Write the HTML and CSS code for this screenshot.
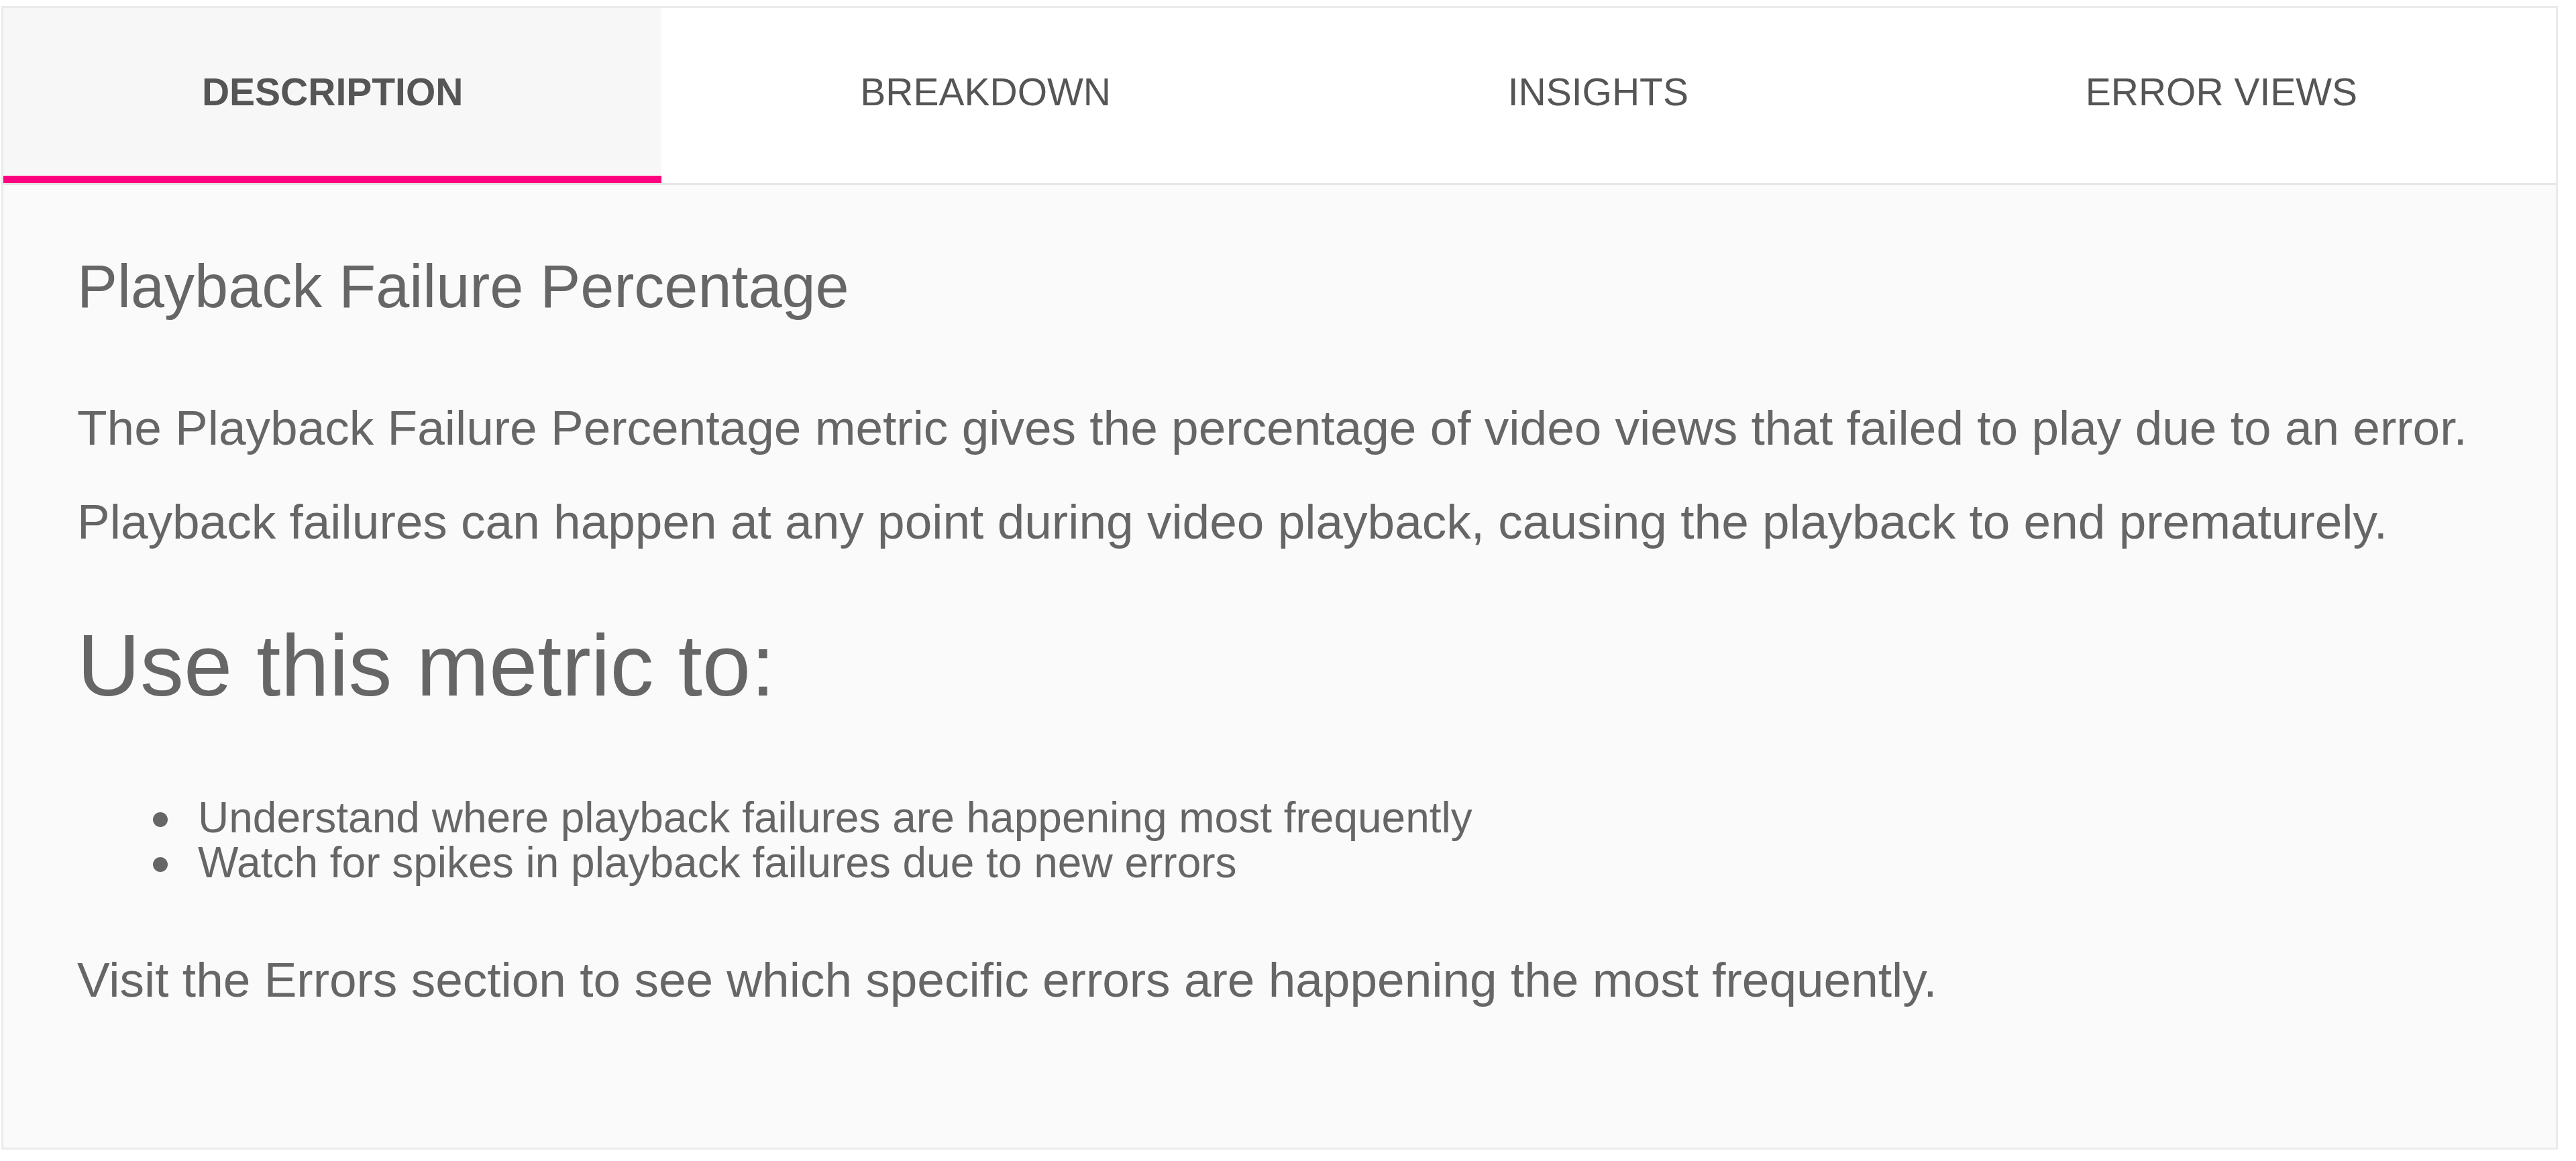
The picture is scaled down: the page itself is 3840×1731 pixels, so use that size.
FILE: index.html
```html
<!DOCTYPE html>
<html lang="en">
<head>
<meta charset="utf-8">
<title>Playback Failure Percentage</title>
<link rel="stylesheet" href="styles.css">
</head>
<body>
<div class="page">
  <div class="panel">
    <nav class="tabs">
      <div class="tab active">DESCRIPTION</div>
      <div class="tab">BREAKDOWN</div>
      <div class="tab">INSIGHTS</div>
      <div class="tab">ERROR VIEWS</div>
    </nav>
    <section class="content">
      <h2 class="title">Playback Failure Percentage</h2>
      <p class="para">The Playback Failure Percentage metric gives the percentage of video views that failed to play due to an error.</p>
      <p class="para">Playback failures can happen at any point during video playback, causing the playback to end prematurely.</p>
      <h3 class="subhead">Use this metric to:</h3>
      <ul class="uses">
        <li>Understand where playback failures are happening most frequently</li>
        <li>Watch for spikes in playback failures due to new errors</li>
      </ul>
      <p class="para visit">Visit the Errors section to see which specific errors are happening the most frequently.</p>
    </section>
  </div>
</div>
</body>
</html>
```
FILE: styles.css
```css
html, body {
  margin: 0;
  padding: 0;
  background: #ffffff;
}

body {
  font-family: "Liberation Sans", Arial, sans-serif;
  color: #666666;
}

.page {
  padding: 9px 0 0 2px;
}

.panel {
  width: 3811px;
  height: 1705px;
  box-sizing: border-box;
  border: 3px solid #ebebeb;
  background: #fafafa;
  display: flex;
  flex-direction: column;
}

.tabs {
  display: flex;
  height: 264px;
  box-sizing: border-box;
  border-bottom: 3px solid #e6e6e6;
  background: #ffffff;
}

.tab {
  flex: 1 1 auto;
  display: flex;
  align-items: center;
  justify-content: center;
  box-sizing: border-box;
  border-bottom: 11px solid transparent;
  font-size: 57px;
  color: #555555;
  white-space: nowrap;
}

.tab.active {
  background: #f7f7f7;
  border-bottom-color: #ff0080;
  font-weight: bold;
}

.content {
  flex: 1;
  padding: 97px 110px 0 110px;
}

.title {
  margin: 0 0 105px;
  font-size: 90px;
  line-height: 108px;
  font-weight: normal;
  color: #666666;
}

.para {
  margin: 0 0 36px;
  font-size: 73px;
  line-height: 104px;
}

.subhead {
  margin: 85px 0 0;
  font-size: 130px;
  line-height: 155px;
  font-weight: normal;
  color: #666666;
}

.uses {
  margin: 116px 0 0;
  padding-left: 180px;
  list-style: none;
  font-size: 64px;
  line-height: 67px;
}

.uses li::before {
  content: "";
  display: inline-block;
  width: 22px;
  height: 22px;
  border-radius: 50%;
  background: #666666;
  margin-left: -67px;
  margin-right: 45px;
  vertical-align: 8px;
}

.visit {
  margin-top: 89px;
}
```
